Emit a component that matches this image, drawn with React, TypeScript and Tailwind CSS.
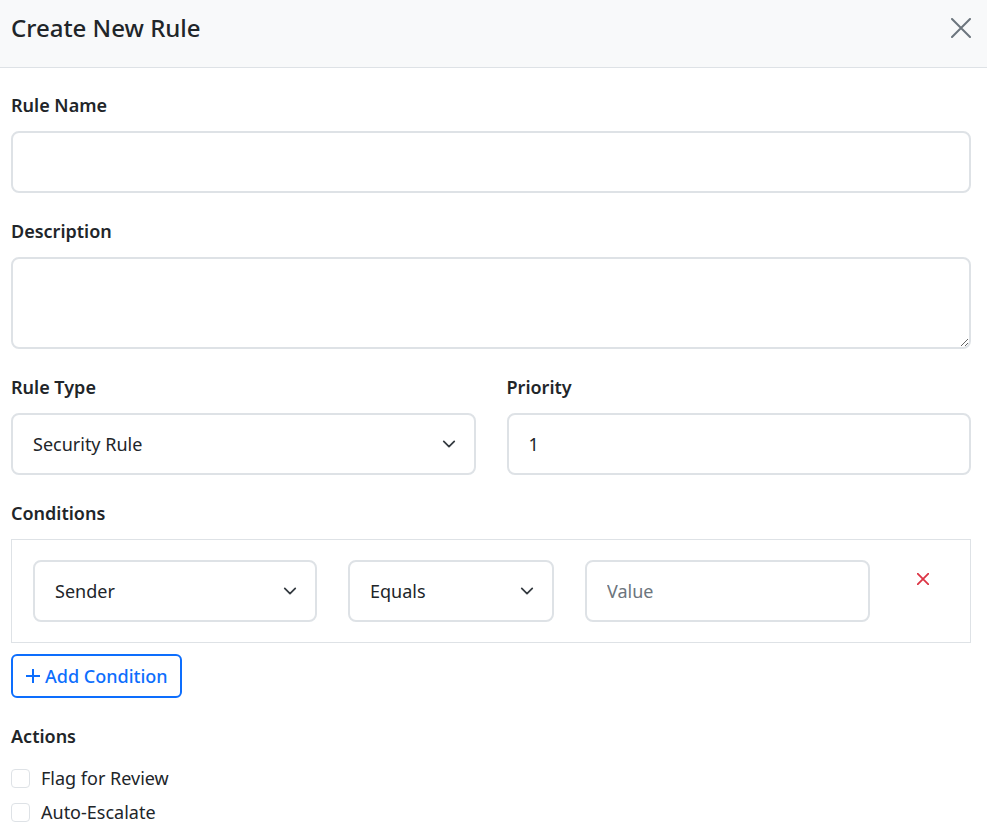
const field =
  "block w-full h-[62px] rounded-[8px] border-2 border-[#dee2e6] bg-white px-[20px] text-[18px] text-[#212529] outline-none placeholder:text-[#6c757d]";

function Label({ children }: { children: React.ReactNode }) {
  return (
    <label className="mb-[12px] block text-[18px] font-semibold leading-[27px] text-[#212529]">
      {children}
    </label>
  );
}

function Cross({ className, width }: { className?: string; width: number }) {
  return (
    <svg className={className} viewBox="0 0 20 20" fill="none" stroke="currentColor" strokeWidth={width} strokeLinecap="round">
      <path d="M1 1l18 18M19 1 1 19" />
    </svg>
  );
}

function Select({ value, options }: { value: string; options: string[] }) {
  return (
    <div className="relative">
      <select defaultValue={value} className={`${field} appearance-none pr-[44px]`}>
        {options.map((o) => (
          <option key={o}>{o}</option>
        ))}
      </select>
      {/* chevron */}
      <svg
        className="pointer-events-none absolute right-[20px] top-1/2 h-[14px] w-[14px] -translate-y-1/2"
        viewBox="0 0 16 16"
        fill="none"
        stroke="#343a40"
        strokeWidth="2"
        strokeLinecap="round"
        strokeLinejoin="round"
      >
        <path d="m2 5 6 6 6-6" />
      </svg>
    </div>
  );
}

export default function App() {
  return (
    <div
      className="min-h-[840px] w-[987px] bg-white text-[#212529]"
      style={{ fontFamily: '"Noto Sans", "Open Sans", sans-serif' }}
    >
      <header className="flex h-[68px] items-center justify-between border-b border-[#dee2e6] bg-[#f8f9fa] pb-[12px] pl-[11px] pr-[16px]">
        <h2 className="text-[24px] font-medium leading-none text-[#212529]">Create New Rule</h2>
        <button type="button" aria-label="Close" className="text-[#6c757d]">
          <Cross className="h-[20px] w-[20px]" width={2} />
        </button>
      </header>

      <div className="pl-[11px] pr-[16px] pt-[24px]">
        <div className="mb-[25px]">
          <Label>Rule Name</Label>
          <input className={field} />
        </div>

        <div className="mb-[25px]">
          <Label>Description</Label>
          <textarea className={`${field} h-[92px] resize-y py-[10px]`} />
        </div>

        <div className="mb-[25px] grid grid-cols-2 gap-[31px]">
          <div>
            <Label>Rule Type</Label>
            <Select value="Security Rule" options={["Security Rule", "Compliance Rule", "Routing Rule"]} />
          </div>
          <div>
            <Label>Priority</Label>
            <input className={field} defaultValue="1" />
          </div>
        </div>

        <div className="mb-[25px]">
          <Label>Conditions</Label>
          <div className="grid grid-cols-[284px_206px_285px_1fr] gap-[31px] border border-[#dee2e6] py-[20px] pl-[21px] pr-[20px]">
            <Select value="Sender" options={["Sender", "Subject", "Recipient"]} />
            <Select value="Equals" options={["Equals", "Contains", "Starts With"]} />
            <input className={field} placeholder="Value" />
            <div className="pl-[16px] pt-[13px]">
              <button type="button" aria-label="Remove condition" className="block text-[#dc3545]">
                <Cross className="h-[12px] w-[12px]" width={3} />
              </button>
            </div>
          </div>
          <button
            type="button"
            className="mt-[11px] flex h-[44px] items-center gap-[4px] rounded-[6px] border-2 border-[#0d6efd] px-[12px] text-[18px] font-medium text-[#0d6efd]"
          >
            <svg viewBox="0 0 16 16" className="h-[16px] w-[16px]" fill="none" stroke="currentColor" strokeWidth="2">
              <path d="M8 1v14M1 8h14" />
            </svg>
            Add Condition
          </button>
        </div>

        <div>
          <Label>Actions</Label>
          <div className="mt-[-1px]">
            {["Flag for Review", "Auto-Escalate"].map((a) => (
              <label key={a} className="flex h-[34px] items-center gap-[11px] text-[18px] text-[#212529]">
                <input
                  type="checkbox"
                  className="h-[19px] w-[19px] appearance-none rounded-[4px] border border-[#dee2e6] bg-white"
                />
                {a}
              </label>
            ))}
          </div>
        </div>
      </div>
    </div>
  );
}
